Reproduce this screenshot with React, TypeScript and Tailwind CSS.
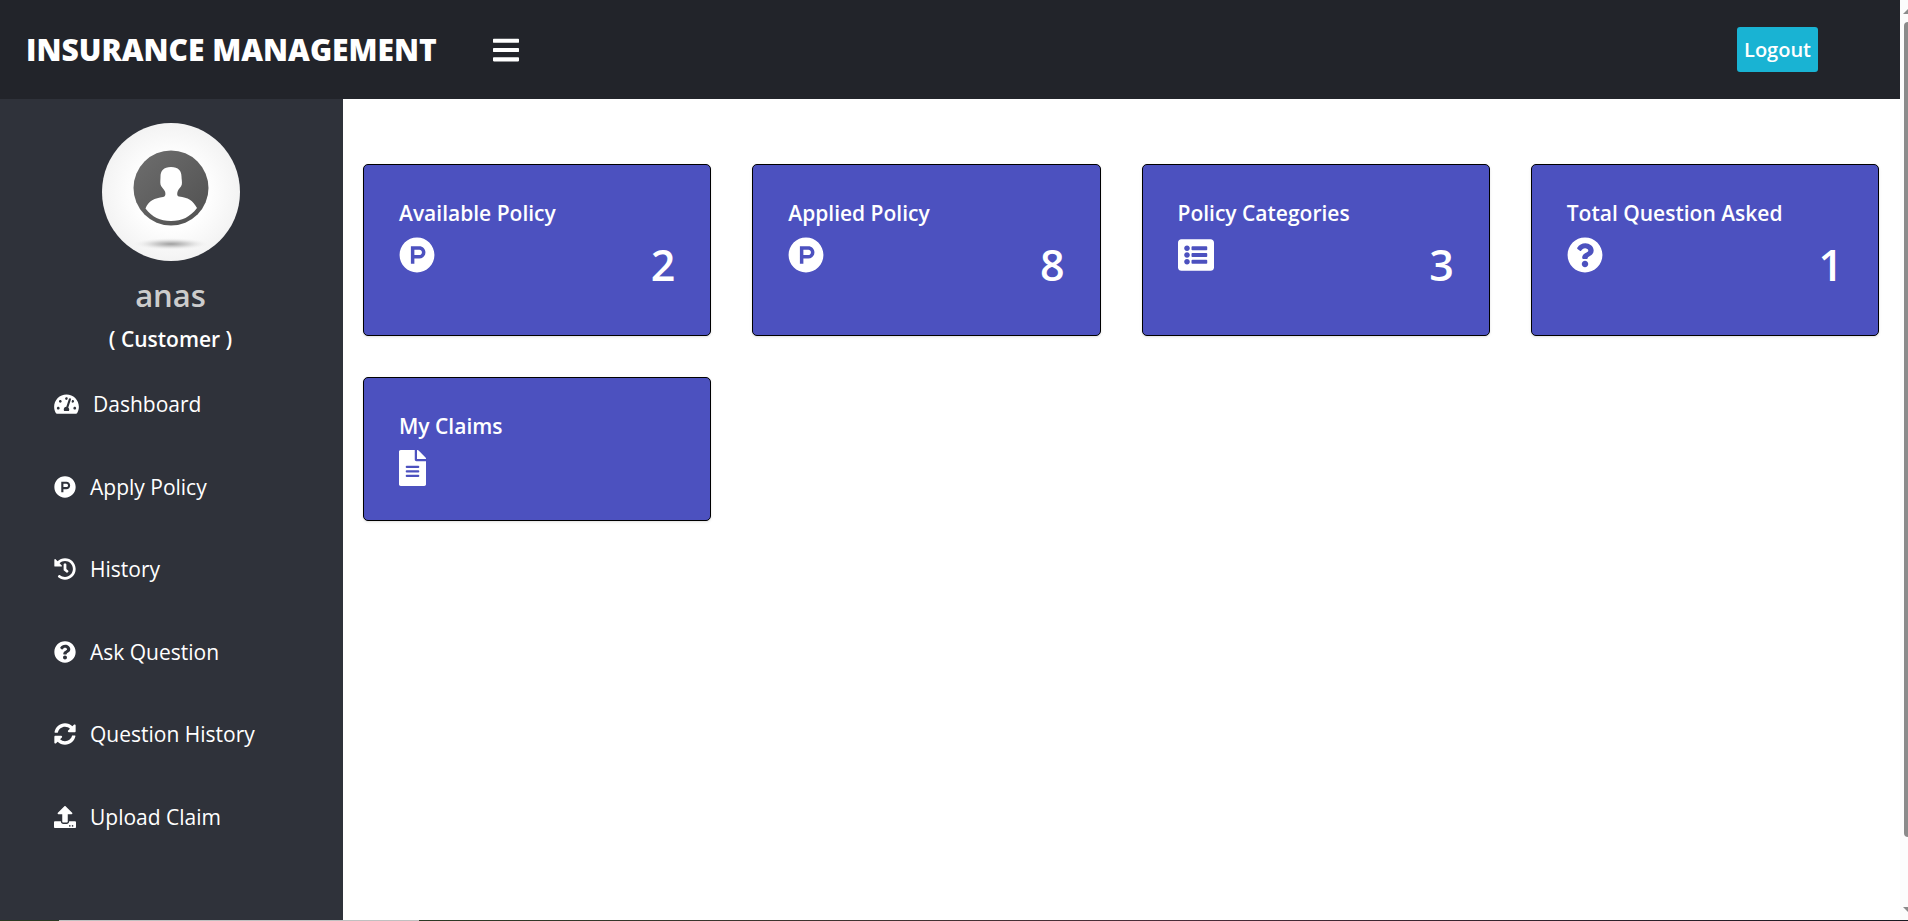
import type { ReactNode } from "react";
import {
  FaBars,
  FaFileAlt,
  FaHistory,
  FaListAlt,
  FaProductHunt,
  FaQuestionCircle,
  FaSyncAlt,
  FaTachometerAlt,
  FaUpload,
} from "react-icons/fa";

type MenuItem = { label: string; icon: ReactNode };
type Stat = { label: string; icon: ReactNode; value?: number };

const menu: MenuItem[] = [
  { label: "Dashboard", icon: <FaTachometerAlt className="h-[22px] w-[25px]" /> },
  { label: "Apply Policy", icon: <FaProductHunt className="size-[22px]" /> },
  { label: "History", icon: <FaHistory className="size-[22px]" /> },
  { label: "Ask Question", icon: <FaQuestionCircle className="size-[22px]" /> },
  { label: "Question History", icon: <FaSyncAlt className="size-[22px]" /> },
  { label: "Upload Claim", icon: <FaUpload className="size-[22px]" /> },
];

const stats: Stat[] = [
  { label: "Available Policy", icon: <FaProductHunt className="size-9" />, value: 2 },
  { label: "Applied Policy", icon: <FaProductHunt className="size-9" />, value: 8 },
  { label: "Policy Categories", icon: <FaListAlt className="size-9" />, value: 3 },
  { label: "Total Question Asked", icon: <FaQuestionCircle className="size-9" />, value: 1 },
  { label: "My Claims", icon: <FaFileAlt className="h-9 w-[27px]" /> },
];

function Avatar() {
  return (
    <svg viewBox="0 0 138 138" className="size-[138px] rounded-full" role="img" aria-label="Profile">
      <defs>
        <radialGradient id="paper">
          <stop offset="0.5" stopColor="#ffffff" />
          <stop offset="1" stopColor="#f3f3f3" />
        </radialGradient>
        <linearGradient id="disc" x1="0" y1="0" x2="1" y2="1">
          <stop offset="0" stopColor="#6e6e6e" />
          <stop offset="1" stopColor="#505050" />
        </linearGradient>
        <radialGradient id="shade">
          <stop offset="0" stopColor="#a0a0a0" />
          <stop offset="0.5" stopColor="#d8d8d8" />
          <stop offset="1" stopColor="#f4f4f4" stopOpacity="0" />
        </radialGradient>
      </defs>
      <rect width="138" height="138" fill="url(#paper)" />
      <ellipse cx="69" cy="121" rx="38" ry="6" fill="url(#shade)" />
      <circle cx="69" cy="65" r="37.500" fill="url(#disc)" />
      <path
        d="M69 44c7.500 0 10.500 4 10.500 9.500 0 3 .8 5 .3 8-.5 2.500-3 4-4 6.500-.8 2.500-1 5 1.200 5.500 9 1 14 4 18 11.500C88 94 80 98 69 98s-19-4-25.500-12.500C46 78 53 75 61 74c3-.5 2.600-3.500 2-5.500-1-2.500-4-4.500-4.500-7-.4-3 0-5 0-8C58.500 48 61.500 44 69 44z"
        fill="#fff"
      />
    </svg>
  );
}

function StatCard({ label, icon, value }: Stat) {
  return (
    <section className="self-start rounded-[5px] border border-black bg-[#4c51bf] px-[35px] pt-8 pb-[34px] text-white shadow-sm">
      <h2 className="text-[21px] leading-8 font-semibold">{label}</h2>
      <div className="mt-2 flex items-start justify-between">
        {icon}
        {value !== undefined && (
          <span className="pb-2 text-[43px] leading-[56px] font-semibold">{value}</span>
        )}
      </div>
    </section>
  );
}

function ScrollTrack() {
  return (
    <div className="flex w-2 shrink-0 flex-col overflow-hidden bg-[#fcfcfc] pt-[9px] pb-2" aria-hidden="true">
      <svg viewBox="0 0 5 5" className="ml-[3px] size-[5px]">
        <path d="M5 0v5H0z" fill="#8b8b8b" />
      </svg>
      <div className="mt-2 mb-[70px] ml-1 flex-1 rounded-l-full bg-[#8b8b8b]" />
      <svg viewBox="0 0 5 5" className="ml-[3px] size-[5px]">
        <path d="M0 0h5v5z" fill="#8b8b8b" />
      </svg>
    </div>
  );
}

export default function App() {
  return (
    <div className="flex h-screen flex-col bg-white font-['Segoe_UI','Open_Sans',sans-serif]">
      <div className="flex min-h-0 flex-1">
        <div className="flex min-w-0 flex-1 flex-col">
          <header className="flex h-[99px] shrink-0 items-center bg-[#22242a] pr-[82px] pl-[26px] text-white">
            <h1 className="text-[30px] leading-10 font-extrabold">INSURANCE MANAGEMENT</h1>
            <button type="button" aria-label="Toggle menu" className="ml-[56px]">
              <FaBars className="h-[30px] w-[26px]" />
            </button>
            <a href="#logout" className="ml-auto rounded-[3px] bg-[#19b3d3] px-[7px] py-[7px] text-[20px] leading-[31px] font-semibold">
              Logout
            </a>
          </header>
          <div className="flex min-h-0 flex-1">
            <aside className="w-[343px] shrink-0 bg-[#2f323a] text-white">
              <div className="flex flex-col items-center pt-6 pr-0.5">
                <Avatar />
                <p className="mt-[10px] text-[31px] leading-[48px] font-semibold text-[#ccc]">anas</p>
                <p className="mt-1 text-[21px] leading-8 font-semibold">( Customer )</p>
              </div>
              <nav className="mt-2 grid h-[495px] grid-rows-6">
                {menu.map(({ label, icon }) => (
                  <a key={label} href="#menu" className="flex items-center gap-[14px] pl-[54px] text-[21px] leading-8">
                    {icon}
                    {label}
                  </a>
                ))}
              </nav>
            </aside>
            <main className="grid min-w-0 flex-1 grid-cols-4 content-start gap-[41px] pt-[65px] pr-[21px] pl-5">
              {stats.map((stat) => (
                <StatCard key={stat.label} {...stat} />
              ))}
            </main>
          </div>
        </div>
        <ScrollTrack />
      </div>
      <div className="flex h-px shrink-0">
        <div className="w-[59px] bg-[#2b3a24]" />
        <div className="w-[360px] bg-[#c0c0c0]" />
        <div className="flex-1 bg-linear-to-r from-[#2b3a24] via-[#4a2c38] to-[#1a1a22]" />
      </div>
    </div>
  );
}
